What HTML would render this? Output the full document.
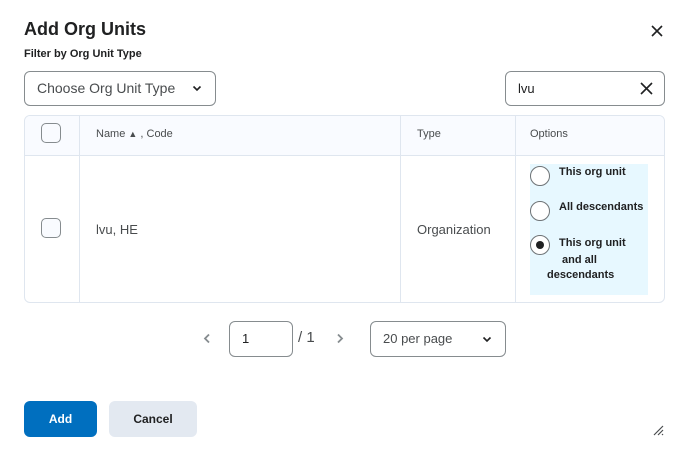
<!DOCTYPE html>
<html><head><meta charset="utf-8"><style>
*{box-sizing:border-box;margin:0;padding:0}
body{width:680px;height:449px;background:#fff;font-family:"Liberation Sans",sans-serif;color:#202122;position:relative;overflow:hidden}
.a{position:absolute}
.box{position:absolute;border:1px solid #868c8f;border-radius:6px;background:#fff}
.cb{position:absolute;width:20px;height:20px;border:1px solid #868c8f;border-radius:5px;background:#f9fbff}
.rd{position:absolute;width:20px;height:20px;border:1px solid #6e7376;border-radius:50%;background:#fff}
.t{position:absolute;white-space:nowrap}
</style></head><body>
<div class="t" style="left:24px;top:19px;font-size:18px;font-weight:bold;color:#202122">Add Org Units</div>
<svg class="a" style="left:651px;top:25px" width="12" height="12" viewBox="0 0 12 12"><path d="M1 1L11 11M11 1L1 11" stroke="#202122" stroke-width="1.6"/></svg>
<div class="t" style="left:24px;top:48px;font-size:11px;font-weight:bold">Filter by Org Unit Type</div>
<div class="box" style="left:24px;top:71px;width:192px;height:35px"></div>
<div class="t" style="left:37px;top:80px;font-size:14px;color:#494c4e">Choose Org Unit Type</div>
<svg class="a" style="left:192px;top:85px" width="10" height="7" viewBox="0 0 10 7"><path d="M1.5 1.5L5 5L8.5 1.5" stroke="#202122" stroke-width="1.6" fill="none"/></svg>
<div class="box" style="left:505px;top:71px;width:160px;height:35px"></div>
<div class="t" style="left:518px;top:81px;font-size:13px">lvu</div>
<svg class="a" style="left:640px;top:82px" width="13" height="13" viewBox="0 0 13 13"><path d="M1 1L12 12M12 1L1 12" stroke="#202122" stroke-width="1.6"/></svg>
<div class="a" style="left:24px;top:115px;width:641px;height:188px;border:1px solid #dfe6ef;border-radius:6px;overflow:hidden">
 <div class="a" style="left:0;top:0;width:100%;height:40px;background:#f9fbff;border-bottom:1px solid #dfe6ef"></div>
 <div class="a" style="left:54px;top:0;width:1px;height:100%;background:#dfe6ef"></div>
 <div class="a" style="left:375px;top:0;width:1px;height:100%;background:#dfe6ef"></div>
 <div class="a" style="left:490px;top:0;width:1px;height:100%;background:#dfe6ef"></div>
 <div class="a" style="left:505px;top:48px;width:118px;height:131px;background:#e7f8ff"></div>
</div>
<div class="cb" style="left:41px;top:123px"></div>
<div class="t" style="left:96px;top:128px;font-size:11px;color:#494c4e">Name <span style="font-size:9px">&#9650;</span> , Code</div>
<div class="t" style="left:417px;top:128px;font-size:11px;color:#494c4e">Type</div>
<div class="t" style="left:530px;top:128px;font-size:11px;color:#494c4e">Options</div>
<div class="cb" style="left:41px;top:218px"></div>
<div class="t" style="left:96px;top:222px;font-size:13px;color:#494c4e">lvu, HE</div>
<div class="t" style="left:417px;top:222px;font-size:13px;color:#494c4e">Organization</div>
<div class="rd" style="left:530px;top:166px"></div>
<div class="t" style="left:559px;top:166px;font-size:11px;font-weight:bold;color:#202122">This org unit</div>
<div class="rd" style="left:530px;top:201px"></div>
<div class="t" style="left:559px;top:201px;font-size:11px;font-weight:bold;color:#202122">All descendants</div>
<div class="rd" style="left:530px;top:235px"></div>
<div class="a" style="left:536px;top:241px;width:8px;height:8px;border-radius:50%;background:#202122"></div>
<div class="t" style="left:559px;top:235px;font-size:11px;font-weight:bold;line-height:17px;color:#202122">This org unit<br>&nbsp;and all</div>
<div class="t" style="left:547px;top:269px;font-size:11px;font-weight:bold;color:#202122">descendants</div>
<svg class="a" style="left:203px;top:333px" width="8" height="11" viewBox="0 0 8 11"><path d="M6 1.5L2 5.5L6 9.5" stroke="#868c8f" stroke-width="1.8" fill="none"/></svg>
<div class="box" style="left:229px;top:321px;width:64px;height:36px"></div>
<div class="t" style="left:242px;top:331px;font-size:13px">1</div>
<div class="t" style="left:298px;top:329px;font-size:15px;color:#494c4e">/ 1</div>
<svg class="a" style="left:336px;top:333px" width="8" height="11" viewBox="0 0 8 11"><path d="M2 1.5L6 5.5L2 9.5" stroke="#868c8f" stroke-width="1.8" fill="none"/></svg>
<div class="box" style="left:370px;top:321px;width:136px;height:36px"></div>
<div class="t" style="left:383px;top:331px;font-size:13px;color:#494c4e">20 per page</div>
<svg class="a" style="left:482px;top:336px" width="10" height="7" viewBox="0 0 10 7"><path d="M1.5 1.5L5 5L8.5 1.5" stroke="#202122" stroke-width="1.6" fill="none"/></svg>
<div class="a" style="left:24px;top:401px;width:73px;height:36px;background:#006fbf;border-radius:6px;color:#fff;font-size:12px;font-weight:bold;text-align:center;line-height:36px">Add</div>
<div class="a" style="left:109px;top:401px;width:88px;height:36px;background:#e3e9f1;border-radius:6px;color:#202122;font-size:12px;font-weight:bold;text-align:center;line-height:36px">Cancel</div>
<svg class="a" style="left:652px;top:424px" width="12" height="12" viewBox="0 0 12 12"><path d="M11 2L2 11M11 6L6 11M11 10L10 11" stroke="#494c4e" stroke-width="1.2"/></svg>
</body></html>
